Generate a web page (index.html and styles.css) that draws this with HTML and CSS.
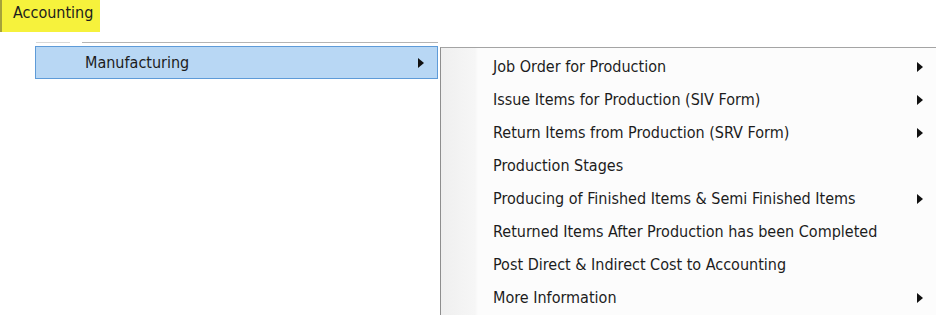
FILE: index.html
```html
<!DOCTYPE html>
<html lang="en">
<head>
    <meta charset="UTF-8">
    <title>Accounting Menu</title>
    <link rel="stylesheet" href="styles.css">
</head>
<body>
    <div class="tab">Accounting</div>

    <div class="menus">
        <div class="main-menu">
            <div class="sep">
                <span class="sep-a"></span>
                <span class="sep-b"></span>
            </div>
            <div class="item active">
                <span>Manufacturing</span>
                <span class="arrow"></span>
            </div>
        </div>

        <div class="submenu">
            <div class="row"><span>Job Order for Production</span><span class="arrow"></span></div>
            <div class="row"><span>Issue Items for Production (SIV Form)</span><span class="arrow"></span></div>
            <div class="row"><span>Return Items from Production (SRV Form)</span><span class="arrow"></span></div>
            <div class="row"><span>Production Stages</span></div>
            <div class="row"><span>Producing of Finished Items &amp; Semi Finished Items</span><span class="arrow"></span></div>
            <div class="row"><span>Returned Items After Production has been Completed</span></div>
            <div class="row"><span>Post Direct &amp; Indirect Cost to Accounting</span></div>
            <div class="row"><span>More Information</span><span class="arrow"></span></div>
        </div>
    </div>
</body>
</html>
```

FILE: styles.css
```css
body {
    margin: 0;
    background: #ffffff;
    font-family: 'DejaVu Sans Condensed', 'DejaVu Sans', sans-serif;
    font-size: 16px;
    color: #1c1c1c;
    width: 936px;
    height: 320px;
    overflow: hidden;
}
.tab {
    width: 100px;
    height: 32px;
    line-height: 25px;
    padding-left: 11px;
    box-sizing: border-box;
    background: #f6f23c;
    border-left: 2px solid #a6a23a;
    color: #1c1c1c;
}
.menus {
    display: flex;
    margin-top: 10px;
    padding-left: 35px;
}
.main-menu {
    width: 403px;
}
.sep {
    display: flex;
    height: 1px;
    margin-bottom: 3px;
}
.sep-a {
    margin-left: 1px;
    width: 34px;
    background: #d8d8d8;
}
.sep-b {
    margin-left: 12px;
    flex: 1;
    background: #b4b4b4;
}
.item {
    display: flex;
    justify-content: space-between;
    align-items: center;
    height: 33px;
    box-sizing: border-box;
    padding: 0 13px 0 49px;
}
.item.active {
    background: #b8d7f4;
    border: 1px solid #5e9bd8;
}
.submenu {
    flex: 1;
    margin-left: 2px;
    margin-top: 5px;
    height: 268px;
    box-sizing: border-box;
    padding-top: 2px;
    border-left: 1px solid #8e8e8e;
    border-top: 1px solid #a4a4a4;
    background: linear-gradient(to right, #efefef 0, #f6f6f6 34px, #fcfcfc 37px, #fcfcfc 100%);
}
.row {
    display: flex;
    justify-content: space-between;
    align-items: center;
    height: 33px;
    padding: 0 13px 0 52px;
}
.arrow {
    width: 0;
    height: 0;
    border-top: 5px solid transparent;
    border-bottom: 5px solid transparent;
    border-left: 6px solid #111111;
}
```
